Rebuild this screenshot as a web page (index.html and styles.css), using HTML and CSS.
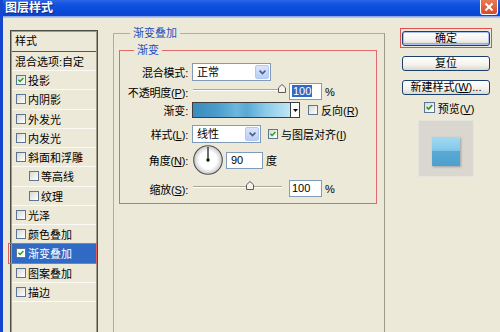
FILE: index.html
```html
<!DOCTYPE html>
<html lang="zh">
<head>
<meta charset="utf-8">
<title>图层样式</title>
<link rel="stylesheet" href="styles.css">
</head>
<body>
<div class="window">
  <div class="titlebar">
    <span class="title">图层样式</span>
    <span class="close"><svg width="10" height="10" viewBox="0 0 10 10"><path d="M1.5 1.5 L8.5 8.5 M8.5 1.5 L1.5 8.5" stroke="#fff" stroke-width="2" fill="none"/></svg></span>
  </div>
  <div class="client">
    <div class="stylelist">
      <div class="list-head">样式</div>
      <div class="item first">混合选项:自定</div>
      <div class="item"><span class="cb"><svg viewBox="0 0 10 10"><path d="M1.8 4.6 L3.9 6.8 L8 2.4" stroke="#21A121" stroke-width="1.8" fill="none"/></svg></span>投影</div>
      <div class="item"><span class="cb"></span>内阴影</div>
      <div class="item"><span class="cb"></span>外发光</div>
      <div class="item"><span class="cb"></span>内发光</div>
      <div class="item"><span class="cb"></span>斜面和浮雕</div>
      <div class="item sub"><span class="cb"></span>等高线</div>
      <div class="item sub"><span class="cb"></span>纹理</div>
      <div class="item"><span class="cb"></span>光泽</div>
      <div class="item"><span class="cb"></span>颜色叠加</div>
      <div class="item selected"><span class="cb"><svg viewBox="0 0 10 10"><path d="M1.8 4.6 L3.9 6.8 L8 2.4" stroke="#21A121" stroke-width="1.8" fill="none"/></svg></span>渐变叠加</div>
      <div class="item"><span class="cb"></span>图案叠加</div>
      <div class="item"><span class="cb"></span>描边</div>
    </div>

    <fieldset class="group">
      <legend>渐变叠加</legend>
      <fieldset class="subgroup">
        <legend>渐变</legend>

        <div class="row r-mode">
          <span class="lbl">混合模式:</span>
          <div class="combo w-mode"><span class="combo-val">正常</span><span class="combo-btn"><svg width="7" height="5" viewBox="0 0 7 5"><path d="M0.6 0.6 L3.5 3.6 L6.4 0.6" stroke="#4D6185" stroke-width="1.6" fill="none"/></svg></span></div>
        </div>

        <div class="row r-op">
          <span class="lbl">不透明度(<u>P</u>):</span>
          <div class="slider"><span class="track"><svg class="thumb" style="left:100%" width="8" height="9" viewBox="0 0 8 9"><path d="M0.5 3.8 L4 0.5 L7.5 3.8 L7.5 8.5 L0.5 8.5 Z" fill="#F4F3EE" stroke="#5a5a55"/></svg></span></div>
          <span class="field w-num"><span class="selected-text">100</span></span>
          <span class="unit">%</span>
        </div>

        <div class="row r-grad">
          <span class="lbl">渐变:</span>
          <div class="gradpick"><span class="grad"></span><span class="gradbtn"><svg width="5" height="3" viewBox="0 0 5 3"><path d="M0 0 L5 0 L2.5 3 Z" fill="#000"/></svg></span></div>
          <span class="cb cb-rev"></span><span class="cblabel">反向(<u>R</u>)</span>
        </div>

        <div class="row r-style">
          <span class="lbl">样式(<u>L</u>):</span>
          <div class="combo w-style"><span class="combo-val">线性</span><span class="combo-btn"><svg width="7" height="5" viewBox="0 0 7 5"><path d="M0.6 0.6 L3.5 3.6 L6.4 0.6" stroke="#4D6185" stroke-width="1.6" fill="none"/></svg></span></div>
          <span class="cb cb-align"><svg viewBox="0 0 10 10"><path d="M1.8 4.6 L3.9 6.8 L8 2.4" stroke="#21A121" stroke-width="1.8" fill="none"/></svg></span><span class="cblabel">与图层对齐(<u>I</u>)</span>
        </div>

        <div class="row r-angle">
          <span class="lbl">角度(<u>N</u>):</span>
          <svg class="dial" width="30" height="30" viewBox="0 0 30 30">
            <defs><radialGradient id="dg" cx="50%" cy="50%" r="50%"><stop offset="0.6" stop-color="#ffffff"/><stop offset="1" stop-color="#c9c9c9"/></radialGradient></defs>
            <circle cx="15" cy="15" r="14.3" fill="url(#dg)" stroke="#505050" stroke-width="1.1"/>
            <line x1="15" y1="15" x2="15" y2="2" stroke="#111" stroke-width="1.2"/>
            <circle cx="15" cy="15" r="1.7" fill="#111"/>
          </svg>
          <span class="field w-angle">90</span>
          <span class="unit">度</span>
        </div>

        <div class="row r-scale">
          <span class="lbl">缩放(<u>S</u>):</span>
          <div class="slider"><span class="track"><svg class="thumb" style="left:64%" width="8" height="9" viewBox="0 0 8 9"><path d="M0.5 3.8 L4 0.5 L7.5 3.8 L7.5 8.5 L0.5 8.5 Z" fill="#F4F3EE" stroke="#5a5a55"/></svg></span></div>
          <span class="field w-num">100</span>
          <span class="unit">%</span>
        </div>
      </fieldset>
    </fieldset>

    <div class="side">
      <div class="default-wrap"><button class="btn default">确定</button></div>
      <button class="btn btn-reset">复位</button>
      <button class="btn btn-new">新建样式(<u>W</u>)...</button>
      <div class="preview-check"><span class="cb"><svg viewBox="0 0 10 10"><path d="M1.8 4.6 L3.9 6.8 L8 2.4" stroke="#21A121" stroke-width="1.8" fill="none"/></svg></span><span class="cblabel">预览(<u>V</u>)</span></div>
      <div class="preview"><span class="swatch"></span></div>
    </div>
  </div>
</div>
</body>
</html>
```

FILE: styles.css
```css
* { box-sizing: border-box; }
html, body { margin: 0; padding: 0; }
body {
  width: 500px;
  height: 332px;
  overflow: hidden;
  background: #ECE9D8;
  font-family: "Liberation Sans", "Noto Sans CJK SC", sans-serif;
  font-size: 11px;
  color: #000;
}
u { text-decoration: underline; text-underline-offset: 1px; }

.window {
  width: 500px;
  height: 332px;
  display: flex;
  flex-direction: column;
  border-left: 3px solid #1646CF;
  background: #ECE9D8;
  overflow: hidden;
}

/* title bar */
.titlebar {
  flex: none;
  height: 18px;
  display: flex;
  align-items: flex-start;
  background: linear-gradient(#2d66e4 0%, #1152e2 25%, #0a4ad8 60%, #0944cf 86%, #7f9ee4 89%, #c3d0ee 100%);
}
.title {
  margin: 2px 0 0 2px;
  color: #fff;
  font-weight: bold;
  font-size: 12px;
  line-height: 13px;
  text-shadow: 1px 1px 0 #0b2a86;
}
.close {
  margin-left: auto;
  margin-right: 2px;
  width: 18px;
  height: 15px;
  background: linear-gradient(#e87a55, #d9492a);
  border: 1px solid #fff;
  border-top: none;
  border-radius: 0 0 3px 3px;
  display: flex;
  align-items: center;
  justify-content: center;
}

/* client */
.client {
  flex: 1;
  min-height: 0;
  display: flex;
  align-items: flex-start;
  padding: 9px 0 0 7px;
}

/* styles list */
.stylelist {
  flex: none;
  width: 88px;
  height: 310px;
  margin-top: 3px;
  border: 1px solid #4d4b45;
  padding: 1px;
  background: #ECE9D8;
  box-shadow: inset 0 0 0 1px #9f9b8e;
}
.list-head {
  height: 20px;
  line-height: 19px;
  padding-left: 3px;
  border-bottom: 1px solid #57554e;
  background: #ECE9D8;
}
.item {
  position: relative;
  height: 19.25px;
  display: flex;
  align-items: center;
  padding-left: 4px;
  border-bottom: 1px solid #fbfaf4;
  white-space: nowrap;
}
.item.first { height: 19px; padding-left: 3px; }
.item.sub { padding-left: 17px; }
.item .cb { margin-right: 2px; }
.item.selected {
  background: #316AC5;
  color: #fff;
}
.item.selected::after {
  content: "";
  position: absolute;
  left: -4px;
  right: -1px;
  top: -1px;
  bottom: -1px;
  border: 1px solid #e25d5d;
}

/* checkbox */
.cb {
  flex: none;
  width: 10px;
  height: 10px;
  border: 1px solid #5d7492;
  background: linear-gradient(135deg, #d9d9d2, #ffffff);
  display: inline-flex;
}
.cb svg { width: 100%; height: 100%; display: block; }
.item.selected .cb { background: #fff; }

/* group boxes */
.group {
  flex: none;
  width: 272px;
  height: 320px;
  margin: 0 0 0 15px;
  padding: 0 7px 0 5px;
  border: 1px solid #b1ad9f;
  border-right-color: #9e9a8b;
  border-bottom: none;
  min-inline-size: 0;
}
.group > legend {
  margin-left: 11px;
  padding: 0 3px;
  line-height: 13px;
  color: #1c4fc4;
}
.subgroup {
  width: 258px;
  margin: 4px 0 0 0;
  padding: 0 0 6px 0;
  border: 1px solid #e06a6a;
  min-inline-size: 0;
}
.subgroup > legend {
  margin-left: 14px;
  padding: 0 3px;
  line-height: 13px;
  color: #1c4fc4;
}

.row {
  display: flex;
  align-items: center;
  white-space: nowrap;
}
.r-mode { margin-top: 6px; height: 18px; }
.r-op { margin-top: 2px; height: 17px; }
.r-grad { margin-top: 2px; height: 16px; }
.r-style { margin-top: 7px; height: 18px; }
.r-angle { margin-top: 2px; height: 30px; }
.r-scale { margin-top: 5px; height: 17px; }

.lbl {
  flex: none;
  width: 68px;
  margin-right: 4px;
  text-align: right;
  letter-spacing: -0.2px;
}

/* combo box */
.combo {
  flex: none;
  height: 18px;
  display: flex;
  align-items: stretch;
  border: 1px solid #7F9DB9;
  background: #fff;
  padding: 1px;
}
.w-mode { width: 79px; }
.w-style { width: 69px; }
.combo-val {
  flex: 1;
  padding-left: 3px;
  line-height: 14px;
}
.combo-btn {
  flex: none;
  width: 14px;
  display: flex;
  align-items: center;
  justify-content: center;
  background: linear-gradient(#dbe5fd, #b9cdf8);
  border: 1px solid #b5c8f3;
  border-radius: 2px;
}

/* slider */
.slider {
  flex: none;
  width: 95px;
  height: 100%;
  display: flex;
  align-items: center;
}
.track {
  position: relative;
  margin: -3px 0 0 1px;
  width: 89px;
  height: 2px;
  border-top: 1px solid #a9a79c;
  border-bottom: 1px solid #ffffff;
}
.thumb {
  position: absolute;
  top: -6px;
  transform: translateX(-50%);
}

/* text fields */
.field {
  flex: none;
  height: 17px;
  margin-left: 2px;
  border: 1px solid #7F9DB9;
  background: #fff;
  padding: 0 2px;
  line-height: 15px;
}
.w-num { width: 33px; }
.w-angle { width: 37px; margin-left: 3px; padding-left: 4px; }
.selected-text { background: #316AC5; color: #fff; padding: 0 1px; }
.unit { margin-left: 3px; }

/* gradient picker */
.gradpick {
  flex: none;
  width: 108px;
  height: 16px;
  display: flex;
  border: 1px solid #3f3f3f;
}
.grad {
  flex: 1;
  background: linear-gradient(to right, #3a8cbe 0%, #4a9ccb 25%, #6fb6dc 45%, #5aa8d3 55%, #8ccbe9 75%, #bfe6f6 100%);
}
.gradbtn {
  flex: none;
  width: 9px;
  border-left: 1px solid #3f3f3f;
  background: #fff;
  display: flex;
  align-items: center;
  justify-content: center;
}
.cb-rev { margin-left: 8px; }
.cb-align { margin-left: 7px; }
.cblabel { margin-left: 3px; }

.dial { flex: none; margin-left: 1px; }

/* side buttons */
.side {
  flex: none;
  width: 92px;
  margin: 1px 0 0 15px;
  display: flex;
  flex-direction: column;
  align-items: center;
}
.default-wrap {
  border: 1px solid #e05050;
  padding: 2px 1px 1px 1px;
}
.btn {
  display: block;
  width: 88px;
  height: 15px;
  margin: 0;
  padding: 0;
  border: 1px solid #1c3f6e;
  border-radius: 3px;
  background: linear-gradient(#ffffff, #f3f2ed 60%, #dcd8cd);
  font-family: "Liberation Sans", "Noto Sans CJK SC", sans-serif;
  font-size: 11px;
  line-height: 13px;
  color: #000;
}
.btn.default { box-shadow: inset 0 0 0 1px #a9c2f0, inset 0 -1px 0 1px #8fb0ea; }
.btn-reset { margin-top: 8px; }
.btn-new { margin-top: 9px; }
.preview-check {
  margin-top: 7px;
  padding-left: 6px;
  height: 11px;
  display: flex;
  align-items: center;
  white-space: nowrap;
}
.preview-check .cb { width: 11px; height: 11px; }
.preview {
  margin-top: 7px;
  width: 56px;
  height: 57px;
  background: #dad7d1;
  border: 1px solid #e6e3dc;
  display: flex;
  justify-content: center;
  padding-top: 16px;
}
.swatch {
  display: block;
  width: 28px;
  height: 29px;
  background: linear-gradient(#a2daf2 0%, #82c8ea 46%, #5aa9d3 50%, #4d9fcd 100%);
  box-shadow: 1px 1px 2px rgba(60, 60, 60, 0.35);
}
```
